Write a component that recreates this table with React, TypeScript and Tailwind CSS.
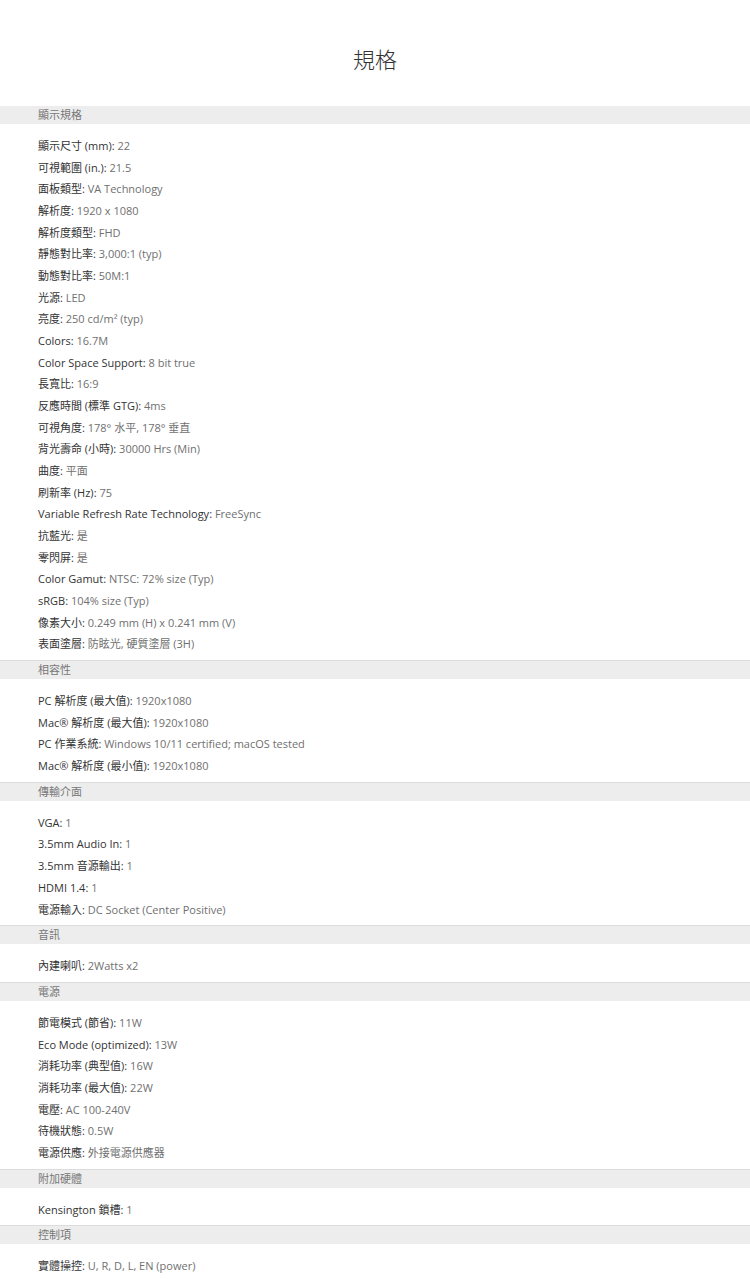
import React from "react"

// ─── Spec data ───
type Row = [string, string]
type Section = { title: string; rows: Row[] }

const sections: Section[] = [
  {
    title: "顯示規格",
    rows: [
      ["顯示尺寸 (mm)", "22"],
      ["可視範圍 (in.)", "21.5"],
      ["面板類型", "VA Technology"],
      ["解析度", "1920 x 1080"],
      ["解析度類型", "FHD"],
      ["靜態對比率", "3,000:1 (typ)"],
      ["動態對比率", "50M:1"],
      ["光源", "LED"],
      ["亮度", "250 cd/m² (typ)"],
      ["Colors", "16.7M"],
      ["Color Space Support", "8 bit true"],
      ["長寬比", "16:9"],
      ["反應時間 (標準 GTG)", "4ms"],
      ["可視角度", "178° 水平, 178° 垂直"],
      ["背光壽命 (小時)", "30000 Hrs (Min)"],
      ["曲度", "平面"],
      ["刷新率 (Hz)", "75"],
      ["Variable Refresh Rate Technology", "FreeSync"],
      ["抗藍光", "是"],
      ["零閃屏", "是"],
      ["Color Gamut", "NTSC: 72% size (Typ)"],
      ["sRGB", "104% size (Typ)"],
      ["像素大小", "0.249 mm (H) x 0.241 mm (V)"],
      ["表面塗層", "防眩光, 硬質塗層 (3H)"],
    ],
  },
  {
    title: "相容性",
    rows: [
      ["PC 解析度 (最大值)", "1920x1080"],
      ["Mac® 解析度 (最大值)", "1920x1080"],
      ["PC 作業系統", "Windows 10/11 certified; macOS tested"],
      ["Mac® 解析度 (最小值)", "1920x1080"],
    ],
  },
  {
    title: "傳輸介面",
    rows: [
      ["VGA", "1"],
      ["3.5mm Audio In", "1"],
      ["3.5mm 音源輸出", "1"],
      ["HDMI 1.4", "1"],
      ["電源輸入", "DC Socket (Center Positive)"],
    ],
  },
  {
    title: "音訊",
    rows: [["內建喇叭", "2Watts x2"]],
  },
  {
    title: "電源",
    rows: [
      ["節電模式 (節省)", "11W"],
      ["Eco Mode (optimized)", "13W"],
      ["消耗功率 (典型值)", "16W"],
      ["消耗功率 (最大值)", "22W"],
      ["電壓", "AC 100-240V"],
      ["待機狀態", "0.5W"],
      ["電源供應", "外接電源供應器"],
    ],
  },
  {
    title: "附加硬體",
    rows: [["Kensington 鎖槽", "1"]],
  },
  {
    title: "控制項",
    rows: [["實體操控", "U, R, D, L, EN (power)"]],
  },
]

function SpecSection({ section, first }: { section: Section; first: boolean }) {
  return (
    <section>
      <div
        className={
          "h-[18px] bg-[#ededed] pl-[38px] text-[11px] leading-[18px] text-[#777] " +
          (first ? "" : "box-content border-t border-[#dcdcdc]")
        }
      >
        {section.title}
      </div>
      <ul className="pl-[38px] pt-[11px] pb-[5px]">
        {section.rows.map(([label, value]) => (
          <li key={label} className="text-[11px] leading-[21.67px]">
            <span className="text-[#333]">{label}: </span>
            <span className="text-[#707070]">{value}</span>
          </li>
        ))}
      </ul>
    </section>
  )
}

export default function App() {
  return (
    <div
      className="min-h-screen bg-white"
      style={{ fontFamily: '"Open Sans", "Noto Sans CJK TC", sans-serif' }}
    >
      <h1 className="pt-[44px] pb-[32px] text-center text-[22px] font-light leading-[30px] text-[#333]">
        規格
      </h1>
      {sections.map((s, i) => (
        <SpecSection key={s.title} section={s} first={i === 0} />
      ))}
    </div>
  )
}
